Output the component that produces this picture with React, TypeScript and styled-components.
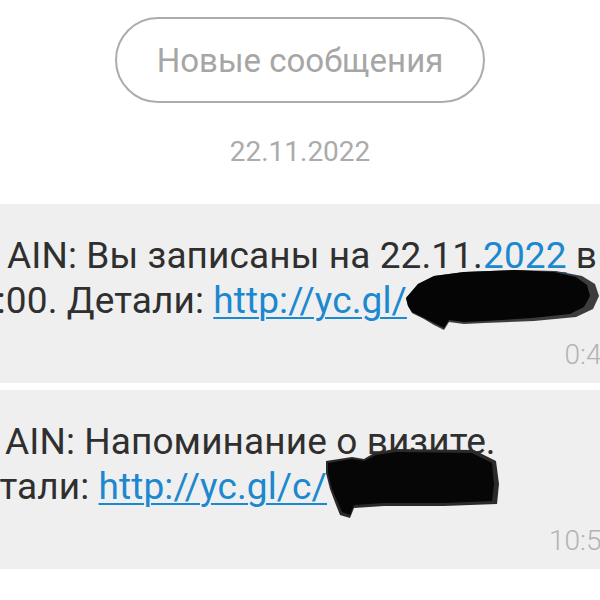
import React from "react";
import styled, { createGlobalStyle } from "styled-components";

const GlobalStyle = createGlobalStyle`
  html, body {
    margin: 0;
    padding: 0;
    background: #ffffff;
  }
  body {
    font-family: Roboto, "Noto Sans", "Liberation Sans", sans-serif;
  }
`;

const Screen = styled.div`
  width: 600px;
  height: 600px;
  overflow: hidden;
  background: #ffffff;
`;

const Header = styled.div`
  display: flex;
  flex-direction: column;
  align-items: center;
  padding-top: 17px;
`;

const NewButton = styled.div`
  box-sizing: border-box;
  width: 370px;
  height: 86px;
  border: 2px solid #acacac;
  border-radius: 43px;
  display: flex;
  align-items: center;
  justify-content: center;
  font-size: 33px;
  color: #a6a6a6;
`;

const DateLabel = styled.div`
  margin-top: 34px;
  height: 30px;
  line-height: 30px;
  font-size: 28px;
  color: #ababab;
`;

const Thread = styled.div`
  margin-top: 37px;
  display: flex;
  flex-direction: column;
  gap: 7px;
`;

const Bubble = styled.div`
  background: #efefef;
  margin-right: -40px;
  padding: 29px 23px 13px 0;
`;

const Line = styled.div<{ $shift: number }>`
  white-space: nowrap;
  font-size: 37px;
  letter-spacing: 0.1px;
  line-height: 45px;
  height: 45px;
  color: #2f2f2f;
  margin-left: ${(p) => p.$shift}px;
`;

const Link = styled.span`
  color: #1b88d0;
  text-decoration: underline;
  text-decoration-thickness: 2px;
  text-underline-offset: 4px;
`;

const Time = styled.div`
  margin-top: 17px;
  height: 30px;
  line-height: 30px;
  text-align: right;
  font-size: 28px;
  font-weight: 300;
  color: #b3b3b3;
`;

const Redaction = styled.span`
  position: relative;
  display: inline-block;
  width: 0;
  height: 1px;
`;

const Blob = styled.svg<{ $top: number; $left: number }>`
  position: absolute;
  top: ${(p) => p.$top}px;
  left: ${(p) => p.$left}px;
`;

const BlobOne = () => (
  <Blob $top={-44} $left={-3} width="196" height="64" viewBox="0 0 196 64">
    <path
      d="M2 30 L14 16 L30 8 L60 4 L110 2 L152 3 L178 8 L191 16 L195 28 L189 41 L172 49 L130 53 L80 55 L60 56 L45 54 L40 62 L30 57 L20 51 L8 45 L4 38 Z"
      fill="#3c3c3c"
    />
    <path
      d="M2 30 L14 16 L30 8 L60 4 L110 2 L150 4 L172 9 L183 17 L186 28 L180 39 L166 46 L128 50 L80 53 L60 54 L45 52 L40 60 L30 55 L20 50 L8 44 L4 38 Z"
      fill="#050505"
    />
  </Blob>
);

const BlobTwo = () => (
  <Blob $top={-49} $left={-3} width="178" height="72" viewBox="0 0 178 72">
    <path
      d="M2 12 L28 8 L40 10 L50 4 L70 0 L150 1 L160 6 L172 12 L175 35 L173 55 L120 57 L60 57 L30 59 L26 69 L16 66 L12 56 L6 40 L2 24 Z"
      fill="#2a2a2a"
    />
    <path
      d="M4 14 L28 10 L40 12 L52 6 L72 3 L148 4 L158 9 L168 14 L170 35 L168 52 L120 54 L60 54 L30 56 L26 66 L18 63 L14 54 L8 40 L4 24 Z"
      fill="#060606"
    />
  </Blob>
);

export default function App() {
  return (
    <Screen>
      <GlobalStyle />
      <Header>
        <NewButton>Новые сообщения</NewButton>
        <DateLabel>22.11.2022</DateLabel>
      </Header>
      <Thread>
        <Bubble>
          <Line $shift={7}>
            AIN: Вы записаны на 22.11.<Link>2022</Link> в
          </Line>
          <Line $shift={-45}>
            10:00. Детали: <Link>http://yc.gl/</Link>
            <Redaction>
              <BlobOne />
            </Redaction>
          </Line>
          <Time>0:47</Time>
        </Bubble>
        <Bubble>
          <Line $shift={5}>AIN: Напоминание о визите.</Line>
          <Line $shift={-48}>
            Детали: <Link>http://yc.gl/c/</Link>
            <Redaction>
              <BlobTwo />
            </Redaction>
          </Line>
          <Time>10:55</Time>
        </Bubble>
      </Thread>
    </Screen>
  );
}
